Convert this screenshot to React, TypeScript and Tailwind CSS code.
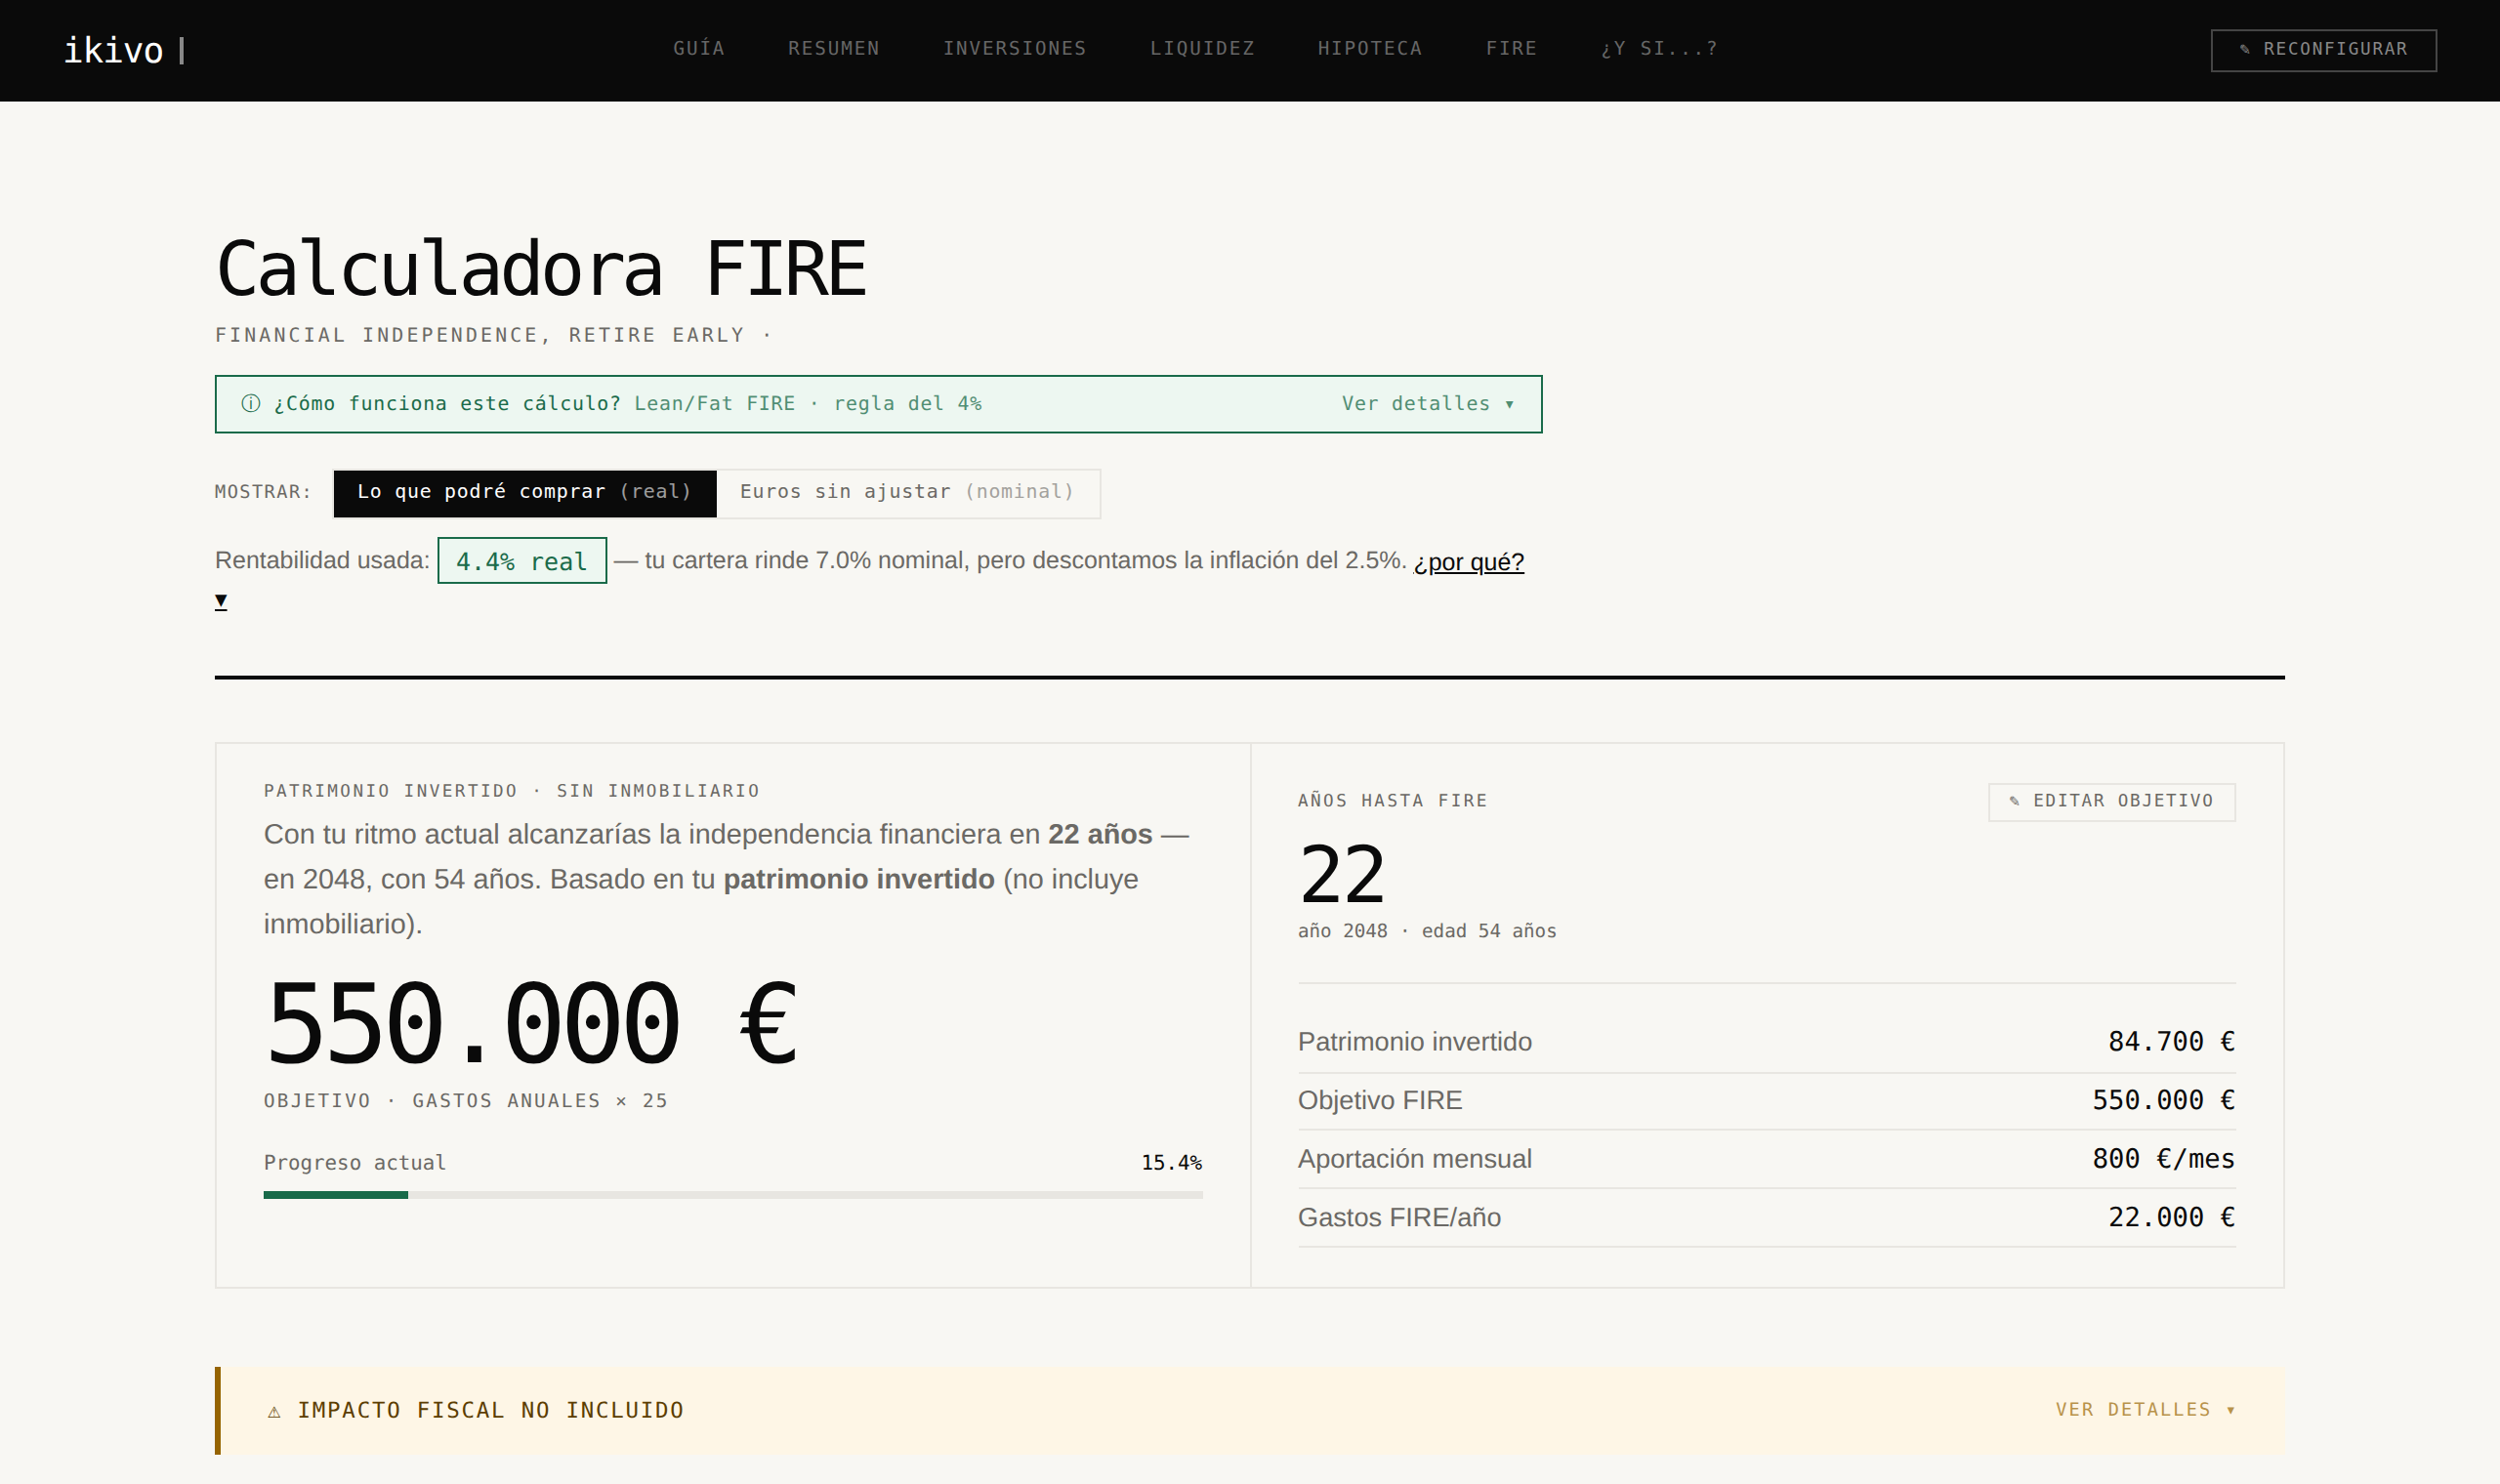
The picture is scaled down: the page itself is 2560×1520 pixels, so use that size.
const navItems = ["Guía", "Resumen", "Inversiones", "Liquidez", "Hipoteca", "FIRE", "¿Y si...?"];

const stats = [
  { label: "Patrimonio invertido", value: "84.700 €", row: "h-[60px]" },
  { label: "Objetivo FIRE", value: "550.000 €", row: "h-[58px]" },
  { label: "Aportación mensual", value: "800 €/mes", row: "h-[60px] pt-[2px]" },
  { label: "Gastos FIRE/año", value: "22.000 €", row: "h-[60px] pt-[2px]" },
];

const progress = 15.4;

function Navbar() {
  return (
    <nav className="flex h-[104px] items-start justify-between bg-[#0a0a0a] px-16 font-['DejaVu_Sans_Mono',monospace]">
      <div className="flex w-[124px] items-start">
        <span className="mt-8 text-[36px] leading-[42px] tracking-[-0.03em] text-white">ikivo</span>
        <span className="mt-[38px] ml-auto h-7 w-1 bg-[#888]" />
      </div>
      <ul className="mt-[39px] mr-[2px] flex gap-16 text-[19.2px] leading-[22px] tracking-[0.1em] text-[#666] uppercase">
        {navItems.map((item) => (
          <li key={item}>{item}</li>
        ))}
      </ul>
      <button className="mt-[30px] h-[44px] w-[232px] border-2 border-[#444] pb-[4px] text-center text-[17.6px] leading-5 tracking-[0.1em] text-[#888] uppercase">
        ✎ Reconfigurar
      </button>
    </nav>
  );
}

function PageHeader() {
  return (
    <header className="flex flex-col border-b-4 border-[#0a0a0a] pb-16">
      <h1 className="mt-32 text-[76.8px] leading-[90px] tracking-[-0.06em] font-['DejaVu_Sans_Mono',monospace]">
        Calculadora FIRE
      </h1>
      <p className="mt-[11px] text-[19.84px] leading-[22px] tracking-[0.16em] text-[#6b6965] uppercase font-['DejaVu_Sans_Mono',monospace]">
        Financial Independence, Retire Early ·
      </p>

      {/* Explainer */}
      <div className="mt-[29px] flex h-[60px] w-[1360px] justify-between border-2 border-[#1a6b4a] bg-[#edf7f1] pt-[17px] pr-[25.6px] pl-[25px] text-[19.84px] leading-[22px] tracking-[0.04em] text-[#1a6b4a] font-['DejaVu_Sans_Mono',monospace]">
        <span>
          ⓘ ¿Cómo funciona este cálculo? <span className="opacity-75">Lean/Fat FIRE · regla del 4%</span>
        </span>
        <span className="opacity-75">Ver detalles ▾</span>
      </div>

      {/* Real / nominal toggle */}
      <div className="mt-9 flex h-[52px] items-start font-['DejaVu_Sans_Mono',monospace]">
        <span className="mt-[14px] w-[120px] text-[18.56px] leading-[22px] tracking-[0.08em] text-[#6b6965] uppercase">
          Mostrar:
        </span>
        <div className="flex h-[52px] border-2 border-[#e8e6e1] text-[19.84px] leading-[22px] tracking-[0.04em]">
          <button className="flex bg-[#0a0a0a] px-6 pt-[11px] whitespace-pre text-white">
            Lo que podré comprar <span className="opacity-60">(real)</span>
          </button>
          <button className="flex px-6 pt-[11px] whitespace-pre text-[#6b6965]">
            Euros sin ajustar <span className="opacity-60">(nominal)</span>
          </button>
        </div>
      </div>

      <div className="mt-[18px] flex h-12 items-start text-[24.96px] leading-[28px] text-[#6b6965]">
        <span className="mt-[10px]">Rentabilidad usada:</span>
        <span className="ml-[7px] h-12 w-[174px] border-2 border-[#1a6b4a] bg-[#edf7f1] pt-[10px] text-center text-[#1a6b4a] font-['DejaVu_Sans_Mono',monospace]">
          4.4% real
        </span>
        <span className="mt-[10px] ml-[7px]">
          — tu cartera rinde 7.0% nominal, pero descontamos la inflación del 2.5%.
        </span>
        <span className="mt-3 ml-[6px] text-[#0a0a0a] underline">¿por qué?</span>
      </div>
      <span className="mt-[2px] w-fit text-[24.96px] leading-[28px] text-[#0a0a0a] underline">▾</span>
    </header>
  );
}

function GoalPanel() {
  return (
    <section className="flex w-[1058px] flex-col px-12 pt-[39px]">
      <p className="text-[17.6px] leading-5 tracking-[0.14em] text-[#6b6965] uppercase font-['DejaVu_Sans_Mono',monospace]">
        Patrimonio invertido · sin inmobiliario
      </p>
      <p className="mt-[11px] text-[28.8px] leading-[46px] text-[#6b6965]">
        Con tu ritmo actual alcanzarías la independencia financiera en <strong>22 años</strong> — en 2048, con 54
        años. Basado en tu <strong>patrimonio invertido</strong> (no incluye inmobiliario).
      </p>
      <p className="mt-6 text-[112px] leading-[112px] tracking-[-0.06em] font-['DejaVu_Sans_Mono',monospace]">
        550.000 €
      </p>
      <p className="mt-[11px] text-[19.2px] leading-[22px] tracking-[0.12em] text-[#6b6965] uppercase font-['DejaVu_Sans_Mono',monospace]">
        Objetivo · gastos anuales × 25
      </p>
      <div className="mt-10 flex justify-between pr-px text-[20.8px] leading-6 font-['DejaVu_Sans_Mono',monospace]">
        <span className="text-[#6b6965]">Progreso actual</span>
        <span>{progress}%</span>
      </div>
      <div className="mt-[17px] h-2 bg-[#e8e6e1]">
        <div className="h-2 bg-[#1a6b4a]" style={{ width: `${progress}%` }} />
      </div>
    </section>
  );
}

function YearsPanel() {
  return (
    <section className="flex w-[1058px] flex-col border-l-2 border-[#e8e6e1] pt-10 pr-12 pl-[47px]">
      <div className="flex h-10 items-start justify-between text-[17.6px] leading-5 text-[#6b6965] uppercase font-['DejaVu_Sans_Mono',monospace]">
        <span className="mt-[9px] tracking-[0.14em]">Años hasta FIRE</span>
        <button className="h-10 w-[254px] border-2 border-[#e8e6e1] pr-px pb-[4px] tracking-[0.1em] uppercase">
          ✎ Editar objetivo
        </button>
      </div>
      <p className="mt-[15px] text-[80px] leading-[80px] tracking-[-0.04em] font-['DejaVu_Sans_Mono',monospace]">22</p>
      <p className="mt-[6px] text-[19.2px] leading-[22px] text-[#6b6965] font-['DejaVu_Sans_Mono',monospace]">
        año 2048 · edad 54 años
      </p>
      <div className="mt-[41px] ml-px border-t-2 border-[#e8e6e1] pt-8">
        {stats.map((s) => (
          <div key={s.label} className={`flex justify-between border-b-2 border-[#e8e6e1] ${s.row}`}>
            <span className="mt-[11px] -ml-px text-[27.2px] leading-8 text-[#6b6965]">{s.label}</span>
            <span className="mt-3 text-[27.2px] leading-8 font-['DejaVu_Sans_Mono',monospace]">{s.value}</span>
          </div>
        ))}
      </div>
    </section>
  );
}

export default function App() {
  return (
    <div className="h-[1520px] w-[2560px] overflow-hidden bg-[#f8f7f3] text-[#0a0a0a] font-['Liberation_Sans',sans-serif] [text-rendering:geometricPrecision]">
      <Navbar />
      <main className="mx-auto w-[2120px]">
        <PageHeader />
        <div className="mt-16 flex h-[560px] border-2 border-[#e8e6e1]">
          <GoalPanel />
          <YearsPanel />
        </div>
        {/* Tax warning */}
        <div className="mt-20 flex h-[90px] justify-between border-l-6 border-[#966400] bg-[#fef6e6] px-12 font-['DejaVu_Sans_Mono',monospace]">
          <span className="mt-8 text-[22.4px] leading-[26px] tracking-[0.08em] text-[#5c3d00]">
            ⚠ IMPACTO FISCAL NO INCLUIDO
          </span>
          <span className="mt-[34px] text-[18.56px] leading-[22px] tracking-[2.17px] text-[#b8924a]">
            VER DETALLES ▾
          </span>
        </div>
      </main>
    </div>
  );
}
